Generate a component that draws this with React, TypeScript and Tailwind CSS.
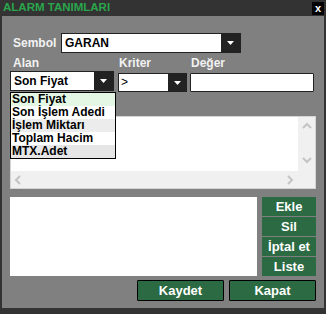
import React from "react"

const font = { fontFamily: '"Liberation Sans", Arial, sans-serif' }

function Caret() {
  return (
    <svg width="7" height="4" viewBox="0 0 7 4">
      <path d="M0 0h7L3.5 4z" fill="#fff" />
    </svg>
  )
}

function Chevron({ dir }: { dir: "up" | "down" | "left" | "right" }) {
  const d = {
    up: "M1 6l4-4 4 4",
    down: "M1 2l4 4 4-4",
    left: "M6 1L2 5l4 4",
    right: "M3 1l4 4-4 4",
  }[dir]
  return (
    <svg width="10" height="10" viewBox="0 0 10 10">
      <path d={d} fill="none" stroke="#c4c4c4" strokeWidth="2" />
    </svg>
  )
}

const fields = ["Son Fiyat", "Son İşlem Adedi", "İşlem Miktarı", "Toplam Hacim", "MTX.Adet"]
const rowBg = ["bg-[#e4f7e4]", "bg-white", "bg-[#ececec]", "bg-white", "bg-[#e6e6e6]"]

export default function App() {
  return (
    <div style={font} className="w-[326px] h-[314px] bg-[#333] flex flex-col text-[12px] font-bold">
      {/* title bar */}
      <div className="h-[16px] flex items-center justify-between pl-[3px] pr-[2px]">
        <span className="text-[11.5px] text-[#2aa64c] leading-none">ALARM TANIMLARI</span>
        <span className="w-[12px] h-[13px] bg-black text-white text-[11px] leading-none flex items-center justify-center mt-[1px]">x</span>
      </div>

      <div className="relative mx-[2px] h-[292px] bg-[#808080] px-[8px] pt-[17px]">
        {/* sembol */}
        <div className="flex items-center h-[20px]">
          <span className="w-[51px] pl-[3px] text-[#f2f2f2]">Sembol</span>
          <div className="flex h-[20px] border border-[#222]">
            <div className="w-[159px] bg-white px-[3px] leading-[18px] text-black">GARAN</div>
            <div className="w-[19px] bg-[#222] flex items-center justify-center"><Caret /></div>
          </div>
        </div>

        {/* labels */}
        <div className="flex mt-[3px] h-[14px] items-center text-[#f2f2f2]">
          <span className="w-[109px] pl-[3px]">Alan</span>
          <span className="w-[72px]">Kriter</span>
          <span>Değer</span>
        </div>

        {/* selects */}
        <div className="flex mt-[1px] items-start">
          <div className="flex w-[104px] h-[20px] border border-[#222]">
            <div className="flex-1 bg-white px-[3px] leading-[18px] text-black">Son Fiyat</div>
            <div className="w-[19px] bg-[#222] flex items-center justify-center"><Caret /></div>
          </div>
          <div className="flex w-[69px] h-[19px] ml-[4px] mt-[2px] border border-[#222]">
            <div className="flex-1 bg-white px-[2px] leading-[17px] text-black font-normal">&gt;</div>
            <div className="w-[18px] bg-[#222] flex items-center justify-center"><Caret /></div>
          </div>
          <div className="w-[124px] h-[19px] ml-[3px] mt-[2px] bg-white border border-[#222] rounded-[1px]" />
        </div>

        {/* text area with scrollbars */}
        <div className="mt-[24px] w-[306px] h-[73px] border border-[#d4d4d4] bg-white grid grid-cols-[1fr_17px] grid-rows-[1fr_17px]">
          <div className="bg-white" />
          <div className="bg-[#f0f0f0] flex flex-col items-center justify-between py-[5px]">
            <Chevron dir="up" />
            <Chevron dir="down" />
          </div>
          <div className="bg-[#f0f0f0] flex items-center justify-between px-[3px]">
            <Chevron dir="left" />
            <Chevron dir="right" />
          </div>
          <div className="bg-[#f0f0f0]" />
        </div>

        {/* lower list + side buttons */}
        <div className="mt-[8px] flex gap-[5px]">
          <div className="w-[247px] h-[79px] bg-white" />
          <div className="w-[54px] flex flex-col gap-[1px]">
            {["Ekle", "Sil", "İptal et", "Liste"].map((t) => (
              <div key={t} className="h-[19px] bg-[#2b6a43] text-white text-center leading-[19px] text-[13px]">{t}</div>
            ))}
          </div>
        </div>

        {/* bottom buttons */}
        <div className="mt-[4px] flex justify-end gap-[5px]">
          {["Kaydet", "Kapat"].map((t) => (
            <div key={t} className="w-[87px] h-[21px] bg-[#2b6a43] border border-black rounded-[1px] text-white text-center leading-[19px] text-[13px]">{t}</div>
          ))}
        </div>

        {/* open dropdown menu */}
        <div className="absolute left-[8px] top-[76px] w-[106px] border border-black bg-white">
          {fields.map((f, i) => (
            <div key={f} className={`h-[13px] leading-[13px] px-[1px] text-black ${rowBg[i]}`}>{f}</div>
          ))}
        </div>
      </div>
    </div>
  )
}
